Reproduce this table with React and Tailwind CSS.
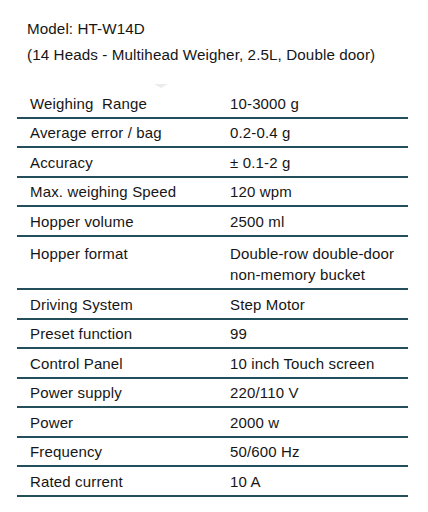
import React from "react";

const specs = [
  ["Weighing\u00a0\u00a0Range", "10-3000 g"],
  ["Average error / bag", "0.2-0.4 g"],
  ["Accuracy", "± 0.1-2 g"],
  ["Max. weighing Speed", "120 wpm"],
  ["Hopper volume", "2500 ml"],
  ["Hopper format", "Double-row double-door non-memory bucket"],
  ["Driving System", "Step Motor"],
  ["Preset function", "99"],
  ["Control Panel", "10 inch Touch screen"],
  ["Power supply", "220/110 V"],
  ["Power", "2000 w"],
  ["Frequency", "50/600 Hz"],
  ["Rated current", "10 A"],
];

function SpecRow({ label, value, tall }) {
  if (tall) {
    return (
      <div className="grid grid-cols-[213px_1fr] items-start h-[53.5px] pt-[6px] leading-[21px] border-b-2 border-[#234f5c]">
        <div className="pl-[13px]">{label}</div>
        <div className="w-[170px]">{value}</div>
      </div>
    );
  }
  return (
    <div className="grid grid-cols-[213px_1fr] items-center h-[29.5px] pt-[2px] border-b-2 border-[#234f5c]">
      <div className="pl-[13px]">{label}</div>
      <div>{value}</div>
    </div>
  );
}

export default function App() {
  return (
    <div
      className="w-[428px] h-[512px] bg-white text-[#161616] overflow-hidden"
      style={{ fontFamily: '"Liberation Sans", Arial, sans-serif' }}
    >
      <div className="pl-[27px] pt-[16px] text-[15.2px] tracking-[0.1px]">
        <div className="leading-[25px]">Model: HT-W14D</div>
        <div className="leading-[25px] mt-[1px]">
          (14 Heads - Multihead Weigher, 2.5L, Double door)
        </div>
      </div>
      <div className="h-[22px] flex items-end pl-[154px]">
        <div className="w-0 h-0 border-l-[7px] border-r-[7px] border-t-[4px] border-l-transparent border-r-transparent border-t-[#ececec] mb-[1px]" />
      </div>
      <div className="ml-[17px] w-[391px] text-[15px] tracking-[0.15px]">
        {specs.map(([label, value]) => (
          <SpecRow
            key={label}
            label={label}
            value={value}
            tall={label === "Hopper format"}
          />
        ))}
      </div>
    </div>
  );
}
